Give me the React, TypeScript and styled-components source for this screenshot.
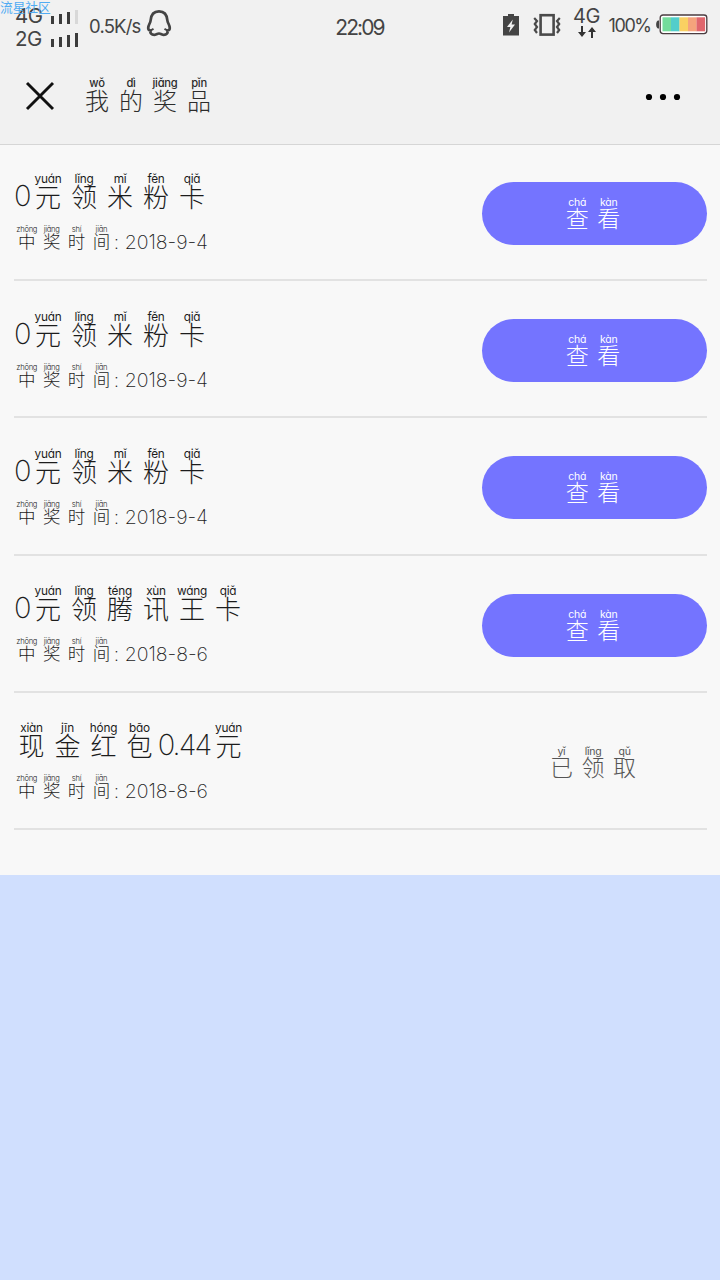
import React from 'react';
import styled, { createGlobalStyle } from 'styled-components';

const GlobalStyle = createGlobalStyle`
  * { box-sizing: border-box; }
  body {
    margin: 0;
    background: #d0dffe;
    font-family: Inter, 'Noto Sans CJK SC', sans-serif;
    font-feature-settings: 'cv11';
  }
`;

const Page = styled.div`
  width: 720px;
  min-height: 1280px;
  background: #d0dffe;
`;

/* ---------- annotated text ---------- */

const sizes = {
  header: { cell: 34, hanzi: 24, hanziLine: 20, pinyin: 11.2, pinyinLine: 14, latin: 24, spacing: 0, drop: 0, pinyinWeight: 500 },
  title: { cell: 36, hanzi: 26, hanziLine: 20, pinyin: 11.8, pinyinLine: 14, latin: 29, spacing: -1.9, drop: 0, pinyinWeight: 400 },
  sub: { cell: 24.9, hanzi: 17.5, hanziLine: 14, pinyin: 7.6, pinyinLine: 8, latin: 19.5, spacing: -0.05, drop: 1, pinyinWeight: 300 },
  action: { cell: 31.6, hanzi: 23, hanziLine: 17, pinyin: 10.5, pinyinLine: 12, latin: 23, spacing: 0, drop: 0, pinyinWeight: 400 },
};
type Size = keyof typeof sizes;

const Line = styled.div<{ $size: Size }>`
  display: flex;
  align-items: flex-end;
  white-space: pre;
`;

const Cell = styled.span<{ $size: Size }>`
  display: flex;
  flex-direction: column;
  align-items: center;
  width: ${(p) => sizes[p.$size].cell}px;
`;

const Pinyin = styled.span<{ $size: Size }>`
  font-size: ${(p) => sizes[p.$size].pinyin}px;
  line-height: ${(p) => sizes[p.$size].pinyinLine}px;
  font-weight: ${(p) => sizes[p.$size].pinyinWeight};
  letter-spacing: -0.25px;
`;

const Hanzi = styled.span<{ $size: Size }>`
  font-family: 'Noto Sans CJK SC', sans-serif;
  font-weight: 300;
  font-size: ${(p) => sizes[p.$size].hanzi}px;
  line-height: ${(p) => sizes[p.$size].hanziLine}px;
`;

const Latin = styled.span<{ $size: Size; $width: number }>`
  width: ${(p) => p.$width}px;
  margin-bottom: -${(p) => sizes[p.$size].drop}px;
  text-align: center;
  font-weight: 200;
  font-size: ${(p) => sizes[p.$size].latin}px;
  line-height: ${(p) => sizes[p.$size].hanziLine}px;
  letter-spacing: ${(p) => sizes[p.$size].spacing}px;
`;

type Part = [string, string] | [string, number];

const Annotated = ({ size, parts }: { size: Size; parts: Part[] }) => (
  <Line $size={size}>
    {parts.map(([text, extra], i) =>
      typeof extra === 'number' ? (
        <Latin key={i} $size={size} $width={extra}>{text}</Latin>
      ) : (
        <Cell key={i} $size={size}>
          <Pinyin $size={size}>{extra}</Pinyin>
          <Hanzi $size={size}>{text}</Hanzi>
        </Cell>
      ),
    )}
  </Line>
);

/* ---------- top area ---------- */

const Top = styled.header`
  position: relative;
  height: 145px;
  background: #f1f1f1;
  border-bottom: 1px solid #d6d6d6;
`;

const Watermark = styled.span`
  position: absolute;
  left: 0;
  top: -1px;
  font: 400 12.7px/15px 'Noto Sans CJK SC', sans-serif;
  color: #4fabf3;
`;

const StatusBar = styled.div`
  display: grid;
  grid-template-columns: 1fr auto 1fr;
  height: 48px;
  padding: 0 12px 0 15px;
  color: #444;
  font-size: 19px;
`;

const StatusGroup = styled.div<{ $end?: boolean }>`
  display: flex;
  align-items: center;
  justify-content: ${(p) => (p.$end ? 'flex-end' : 'flex-start')};
  height: ${(p) => (p.$end ? 49 : 48)}px;
`;

const Networks = styled.div`
  display: flex;
  flex-direction: column;
  padding-top: 5px;
  width: 63px;
`;

const Network = styled.div`
  display: flex;
  align-items: center;
  justify-content: space-between;
  width: 63px;
  height: 23px;
  font-size: 20.5px;
  letter-spacing: -0.4px;
  line-height: 23px;
`;

const BarsSlot = styled.span`
  display: flex;
  padding-top: 3px;
`;

const Speed = styled.span`
  margin: 3px 0 0 11px;
  width: 57px;
  font-size: 18.5px;
  letter-spacing: -0.8px;
`;

const PenguinSlot = styled.span`
  display: flex;
  margin-bottom: 2px;
`;

const Clock = styled.span`
  padding-top: 5px;
  align-self: center;
  margin: 0 4px 0 0;
  font-size: 21px;
  letter-spacing: -1.9px;
`;

const StatusIcons = styled.div`
  display: flex;
  align-items: center;
  gap: 14px;
`;

const MobileData = styled.div`
  display: flex;
  flex-direction: column;
  align-items: center;
  width: 28px;
  margin: 0 8px 4px 12px;
  font-size: 20px;
  line-height: 19px;
  letter-spacing: -0.4px;
`;

const Percent = styled.span`
  width: 46.5px;
  margin-top: 2px;
  font-size: 18px;
  letter-spacing: -1.4px;
  white-space: nowrap;
`;

const TitleBar = styled.div`
  display: flex;
  align-items: center;
  height: 96px;
  padding: 0 39px 0 25px;
  color: #2c2c2c;
`;

const TitleText = styled.div`
  flex: 1;
  margin: 0 0 7px 25px;
`;

const MoreSlot = styled.span`
  display: flex;
  padding-top: 2px;
`;

const Bars = ({ weak }: { weak?: boolean }) => (
  <svg width="27" height="14" viewBox="0 0 27 14" fill="#3c3c3c">
    <rect x="0" y="6" width="3" height="8" />
    <rect x="8" y="4" width="3" height="10" />
    <rect x="16" y="2" width="3" height="12" />
    <rect x="24" y="0" width="3" height="14" fill={weak ? '#d8d8d8' : '#3c3c3c'} />
  </svg>
);

const Penguin = () => (
  <svg width="26" height="28" viewBox="0 0 26 28" fill="none" stroke="#444" strokeWidth="2.7" strokeLinejoin="round">
    <path d="M13 2.400C7.600 2.400 5 6 4.600 11.500C4.400 14 2.200 16 2.200 19C2.200 20.500 3.400 21.500 4.600 21.600C3.800 24 5.500 25.800 8.200 25.800C10 25.800 11 24.500 13 24.500C15 24.500 16 25.800 17.800 25.800C20.500 25.800 22.200 24 21.400 21.600C22.600 21.500 23.800 20.500 23.800 19C23.800 16 21.600 14 21.400 11.500C21 6 18.400 2.400 13 2.400Z" />
    <path d="M4.500 21.500L7.500 19.800M21.500 21.500L18.500 19.800" strokeWidth="2" />
  </svg>
);

const ChargeIcon = () => (
  <svg width="16" height="22" viewBox="0 0 16 22">
    <path d="M5 0H11V2H16V21.5H0V2H5Z" fill="#444" />
    <path d="M9.8 5.5L4 13H7.4L6 18.5L12 10.5H8.600Z" fill="#f1f1f1" />
  </svg>
);

const VibrateIcon = () => (
  <svg width="28" height="24" viewBox="0 0 28 24" fill="none" stroke="#4a4a4a">
    <rect x="7.600" y="2.200" width="13" height="19.400" strokeWidth="2.600" />
    <path d="M1.200 5L4 8L1.800 11L4 14L1.800 17L4 20M26.800 5L24 8L26.200 11L24 14L26.200 17L24 20" strokeWidth="2.200" />
  </svg>
);

const Arrows = () => (
  <svg width="20" height="12" viewBox="0 0 20 12" fill="#333">
    <path d="M4 0H6V6H9L5 11L1 6H4ZM14 12H16V6H19L15 1L11 6H14Z" />
  </svg>
);

const Battery = () => (
  <svg width="53" height="21" viewBox="0 0 53 21">
    <path d="M4 6.500H3C.5 7 .5 14 3 14.500H4Z" fill="#444" />
    <rect x="5.200" y="1" width="46.600" height="18.600" rx="2.800" fill="#fff" stroke="#4b3c40" strokeWidth="1.300" />
    <rect x="7.500" y="3.300" width="8.600" height="14" fill="#74dc9b" />
    <rect x="16" y="3.300" width="8.600" height="14" fill="#52cdcb" />
    <rect x="24.500" y="3.300" width="8.600" height="14" fill="#fad062" />
    <rect x="33" y="3.300" width="8.600" height="14" fill="#f5a37c" />
    <rect x="41.500" y="3.300" width="8.600" height="14" fill="#e0666d" />
  </svg>
);

const CloseIcon = () => (
  <svg width="30" height="30" viewBox="0 0 30 30" stroke="#111" strokeWidth="2.900">
    <path d="M2 2L28 28M28 2L2 28" />
  </svg>
);

const MoreIcon = () => (
  <svg width="36" height="8" viewBox="0 0 36 8" fill="#000">
    <circle cx="4" cy="4" r="3.100" />
    <circle cx="18" cy="4" r="3.100" />
    <circle cx="32" cy="4" r="3.100" />
  </svg>
);

/* ---------- prize list ---------- */

const List = styled.main`
  height: 730px;
  padding: 0 13.500px;
  background: #f8f8f8;
`;

const Row = styled.section`
  display: flex;
  justify-content: space-between;
  height: 137.200px;
  padding-top: 28.400px;
  border-bottom: 2px solid #e2e2e2;
  &:first-child {
    height: 136.200px;
    padding-top: 27.400px;
  }
`;

const Info = styled.div`
  display: flex;
  flex-direction: column;
  gap: 20px;
  color: #1c1c1c;
`;

const SubLine = styled.div`
  padding-left: 0.8px;
`;

const Action = styled.div<{ $done?: boolean }>`
  display: flex;
  align-items: center;
  justify-content: center;
  width: 225px;
  height: 63px;
  margin-top: 9.600px;
  padding: 0 2px 4px 0;
  border-radius: 32px;
  background: ${(p) => (p.$done ? 'transparent' : '#7474ff')};
  color: ${(p) => (p.$done ? '#555' : '#fff')};
`;

const card: Part[] = [['0', 16.5], ['元', 'yuán'], ['领', 'lǐng'], ['米', 'mǐ'], ['粉', 'fěn'], ['卡', 'qiǎ']];

const prizes: { title: Part[]; date: string; done?: boolean }[] = [
  { title: card, date: '2018-9-4' },
  { title: card, date: '2018-9-4' },
  { title: card, date: '2018-9-4' },
  {
    title: [['0', 16.5], ['元', 'yuán'], ['领', 'lǐng'], ['腾', 'téng'], ['讯', 'xùn'], ['王', 'wáng'], ['卡', 'qiǎ']],
    date: '2018-8-6',
  },
  {
    title: [['现', 'xiàn'], ['金', 'jīn'], ['红', 'hóng'], ['包', 'bāo'], ['0.44', 53], ['元', 'yuán']],
    date: '2018-8-6',
    done: true,
  },
];

const view: Part[] = [['查', 'chá'], ['看', 'kàn']];
const received: Part[] = [['已', 'yǐ'], ['领', 'lǐng'], ['取', 'qǔ']];

export default function App() {
  return (
    <Page>
      <GlobalStyle />
      <Top>
        <StatusBar>
          <StatusGroup>
            <Networks>
              <Network>4G<BarsSlot><Bars weak /></BarsSlot></Network>
              <Network>2G<BarsSlot><Bars /></BarsSlot></Network>
            </Networks>
            <Speed>0.5K/s</Speed>
            <PenguinSlot><Penguin /></PenguinSlot>
          </StatusGroup>
          <Clock>22:09</Clock>
          <StatusGroup $end>
            <StatusIcons>
              <ChargeIcon />
              <VibrateIcon />
            </StatusIcons>
            <MobileData>4G<Arrows /></MobileData>
            <Percent>100%</Percent>
            <Battery />
          </StatusGroup>
        </StatusBar>
        <TitleBar>
          <CloseIcon />
          <TitleText>
            <Annotated size="header" parts={[['我', 'wǒ'], ['的', 'dì'], ['奖', 'jiǎng'], ['品', 'pǐn']]} />
          </TitleText>
          <MoreSlot><MoreIcon /></MoreSlot>
        </TitleBar>
        <Watermark>流星社区</Watermark>
      </Top>
      <List>
        {prizes.map((prize, i) => (
          <Row key={i}>
            <Info>
              <Annotated size="title" parts={prize.title} />
              <SubLine>
                <Annotated
                  size="sub"
                  parts={[['中', 'zhōng'], ['奖', 'jiǎng'], ['时', 'shí'], ['间', 'jiān'], [':', 3], [prize.date, 99]]}
                />
              </SubLine>
            </Info>
            <Action $done={prize.done}>
              <Annotated size="action" parts={prize.done ? received : view} />
            </Action>
          </Row>
        ))}
      </List>
    </Page>
  );
}
